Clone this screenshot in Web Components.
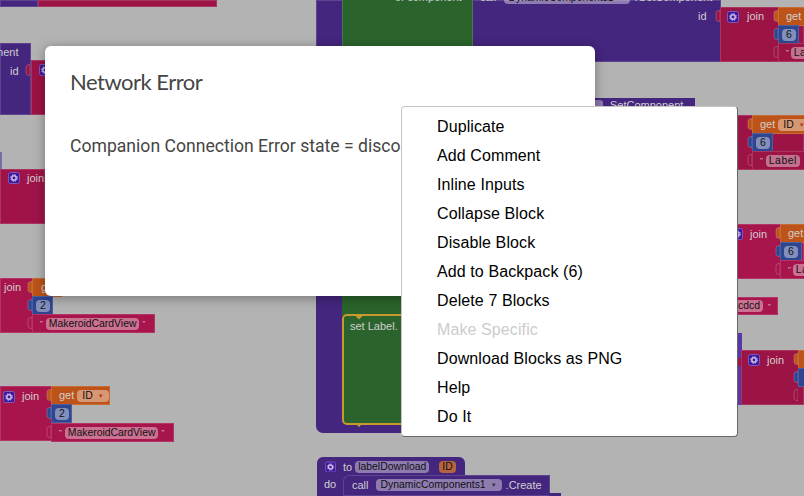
<!DOCTYPE html>
<html>
<head>
<meta charset="utf-8">
<style>
  html, body { margin: 0; padding: 0; }
  body { width: 804px; height: 496px; overflow: hidden; background: #b3b3b3; }
</style>
</head>
<body>
<template id="tpl-canvas">
  <style>
    :host { display: block; position: relative; width: 804px; height: 496px; overflow: hidden; background: #b3b3b3; }
  </style>
  <slot></slot>
</template>

<template id="tpl-block">
  <style>
    :host {
      position: absolute;
      display: flex;
      align-items: center;
      box-sizing: border-box;
      white-space: nowrap;
      font: 11px/11px "Liberation Sans", Arial, sans-serif;
      color: #cfcfcf;
      border: 1px solid rgba(255, 255, 255, .14);
    }
    :host([flat]) { border: none; }
    :host([plain]) { background: none !important; border: none; }
  </style>
  <slot></slot>
</template>

<template id="tpl-pill">
  <style>
    :host {
      display: inline-flex;
      align-items: center;
      height: 12px;
      padding: 0 3px;
      border-radius: 4px;
      background: rgba(255, 255, 255, .4);
      color: #111;
      font: 10.4px/12px "Liberation Sans", Arial, sans-serif;
      white-space: nowrap;
      margin: 0 3px;
    }
    i { font-style: normal; font-size: 6px; margin-left: 5px; color: #b33b1b; }
    :host([dark]) i { color: #333; }
  </style>
  <slot></slot><i hidden>▼</i>
</template>

<template id="tpl-gear">
  <style>
    :host { display: inline-flex; width: 12px; height: 12px; flex: none; }
    svg { display: block; }
  </style>
  <svg width="12" height="12" viewBox="0 0 12 12">
    <rect x=".5" y=".5" width="11" height="11" rx="2" fill="#3f169f" stroke="#7a5cb8"/>
    <circle cx="6" cy="6" r="2.2" fill="none" stroke="#cdbfe6" stroke-width="1.5"/>
    <circle cx="6" cy="6" r="3.4" fill="none" stroke="#cdbfe6" stroke-width="1" stroke-dasharray="1.4 1.27"/>
  </svg>
</template>

<template id="tpl-notch">
  <style>
    :host { position: absolute; display: block; width: 5px; height: 12px; }
    svg { display: block; }
  </style>
  <svg width="5" height="12" viewBox="0 0 5 12">
    <path d="M5 0.5C2 0.5 1 1.5 1 3V9C1 10.5 2 11.5 5 11.5Z" fill="currentColor" stroke="rgba(255,255,255,.3)" stroke-width=".7"/>
  </svg>
</template>

<template id="tpl-dialog">
  <style>
    :host {
      position: absolute;
      left: 45px; top: 46px;
      width: 550px; height: 250px;
      box-sizing: border-box;
      padding: 20px 25px;
      background: #fff;
      border-radius: 6px;
      box-shadow: 0 2px 12px rgba(0, 0, 0, .35);
      color: #444;
      overflow: hidden;
    }
    h2 {
      margin: 0 0 36px;
      font: 400 22px/32px Lato, "Open Sans", sans-serif;
      letter-spacing: -.5px;
      color: #454545;
    }
    p { margin: 0; font: 17.6px/24px Roboto, sans-serif; white-space: nowrap; color: #454545; }
  </style>
  <h2><slot name="title"></slot></h2>
  <p><slot></slot></p>
</template>

<template id="tpl-menu">
  <style>
    :host {
      position: absolute;
      left: 401px; top: 106px;
      width: 337px; height: 331px;
      box-sizing: border-box;
      padding: 5px 0;
      display: flex;
      flex-direction: column;
      background: #fff;
      border: 1px solid #c4c4c4;
      border-right-color: #666;
      border-bottom-color: #666;
      border-radius: 4px;
    }
  </style>
  <slot></slot>
</template>

<template id="tpl-item">
  <style>
    :host {
      display: block;
      height: 29px;
      padding-left: 35px;
      font: 16px/29px "Liberation Sans", Arial, sans-serif;
      letter-spacing: .1px;
      color: #000;
      white-space: nowrap;
    }
    :host([disabled]) { color: #ccc; }
  </style>
  <slot></slot>
</template>

<bk-canvas>
  <!-- top left scraps -->
  <bk-block x="0" y="0" w="38" h="7" c="#44267e"></bk-block>
  <bk-block x="38" y="0" w="179" h="7" c="#9c1346"></bk-block>
  <bk-block x="0" y="43" w="31" h="72" c="#44267e" style="padding:3px 0 0 0;align-items:flex-start"><span style="margin-left:-7px">ment</span></bk-block>
  <bk-block plain x="10" y="65" w="16" h="12">id</bk-block>
  <bk-block x="31" y="60" w="20" h="55" c="#9c1346" style="padding:0 0 0 7px;align-items:flex-start"><bk-gear style="margin-top:3px"></bk-gear></bk-block>
  <bk-notch x="25" y="64" c="#9c1346"></bk-notch>

  <!-- left joins -->
  <bk-block x="0" y="152" w="2" h="18" c="#7a6aa8" flat></bk-block>
  <bk-block x="0" y="169" w="45" h="55" c="#a01349" style="padding:2px 0 0 7px;align-items:flex-start"><bk-gear></bk-gear><span style="margin:1px 0 0 7px">join</span></bk-block>

  <bk-block x="0" y="278" w="33" h="55" c="#a8144c" style="padding:3px 0 0 3px;align-items:flex-start">join</bk-block>
  <bk-block x="32" y="278" w="30" h="19" c="#bd5318" style="padding-left:8px">get</bk-block>
  <bk-block x="32" y="296" w="21" h="19" c="#2f4590" style="padding-left:3px"><bk-pill style="margin:0;padding:0 4px">2</bk-pill></bk-block>
  <bk-block x="32" y="314" w="123" h="19" c="#a8144c" style="padding-left:7px"><span style="font-size:8px">"</span><bk-pill>MakeroidCardView</bk-pill><span style="font-size:8px">"</span></bk-block>
  <bk-notch x="27" y="281" c="#bd5318"></bk-notch>
  <bk-notch x="27" y="299" c="#2f4590"></bk-notch>
  <bk-notch x="27" y="317" c="#a8144c"></bk-notch>

  <bk-block x="0" y="386" w="52" h="55" c="#a8144c" style="padding:4px 0 0 2px;align-items:flex-start"><bk-gear></bk-gear><span style="margin:0 0 0 7px">join</span></bk-block>
  <bk-block x="51" y="386" w="59" h="19" c="#bd5318" style="padding-left:7px">get<bk-pill arrow style="padding:0 5px">ID</bk-pill></bk-block>
  <bk-block x="51" y="404" w="21" h="19" c="#2f4590" style="padding-left:3px"><bk-pill style="margin:0;padding:0 4px">2</bk-pill></bk-block>
  <bk-block x="51" y="423" w="123" h="19" c="#a8144c" style="padding-left:7px"><span style="font-size:8px">"</span><bk-pill>MakeroidCardView</bk-pill><span style="font-size:8px">"</span></bk-block>
  <bk-notch x="46" y="389" c="#bd5318"></bk-notch>
  <bk-notch x="46" y="407" c="#2f4590"></bk-notch>
  <bk-notch x="46" y="426" c="#a8144c"></bk-notch>

  <!-- top centre procedure -->
  <bk-block x="316" y="0" w="405" h="62" c="#44267e"></bk-block>
  <bk-block x="342" y="-6" w="131" h="120" c="#2a642c"></bk-block>
  <bk-block plain x="395" y="-9" w="80" h="13">of component</bk-block>
  <bk-block plain x="480" y="-9" w="240" h="13">call<bk-pill dark arrow style="margin:0 5px 0 7px;padding:0 5px">DynamicComponents1</bk-pill>.GetComponent</bk-block>
  <bk-block plain x="698" y="10" w="16" h="12">id</bk-block>
  <bk-notch x="715" y="10" c="#9c1346"></bk-notch>
  <bk-block x="720" y="7" w="84" h="55" c="#9c1346" style="padding:0 0 0 6px;align-items:flex-start"><bk-gear style="margin-top:3px"></bk-gear><span style="margin:3px 0 0 8px">join</span></bk-block>
  <bk-block x="778" y="7" w="30" h="19" c="#bd5318" style="padding-left:7px">get</bk-block>
  <bk-block x="778" y="25" w="21" h="19" c="#2f4590" style="padding-left:3px"><bk-pill style="margin:0;padding:0 4px">6</bk-pill></bk-block>
  <bk-block x="778" y="43" w="30" h="19" c="#9c1346" style="padding-left:7px"><span style="font-size:8px;margin-right:2px">"</span><bk-pill style="margin:0;letter-spacing:.5px">Label</bk-pill></bk-block>
  <bk-notch x="773" y="10" c="#bd5318"></bk-notch>
  <bk-notch x="773" y="28" c="#2f4590"></bk-notch>
  <bk-notch x="773" y="46" c="#9c1346"></bk-notch>

  <bk-block x="595" y="98" w="100" h="12" c="#44267e" flat style="padding:2px 0 0 0;align-items:flex-start"><span style="display:inline-block;width:8px;height:10px;margin:0 7px 0 0;background:#8b7ab0;border-radius:0 3px 3px 0"></span>SetComponent</bk-block>

  <!-- right column -->
  <bk-block x="737" y="115" w="67" h="55" c="#9c1346"></bk-block>
  <bk-block x="752" y="115" w="60" h="19" c="#bd5318" style="padding-left:7px">get<bk-pill arrow style="padding:0 5px">ID</bk-pill></bk-block>
  <bk-block x="752" y="133" w="21" h="19" c="#2f4590" style="padding-left:3px"><bk-pill style="margin:0;padding:0 4px">6</bk-pill></bk-block>
  <bk-block x="752" y="151" w="60" h="19" c="#9c1346" style="padding-left:7px"><span style="font-size:8px">"</span><bk-pill style="letter-spacing:.5px">Label</bk-pill></bk-block>
  <bk-notch x="747" y="118" c="#bd5318"></bk-notch>
  <bk-notch x="747" y="136" c="#2f4590"></bk-notch>
  <bk-notch x="747" y="154" c="#9c1346"></bk-notch>

  <bk-block x="730" y="224" w="74" h="55" c="#a8144c" style="padding:3px 0 0 0;align-items:flex-start"><bk-gear></bk-gear><span style="margin:1px 0 0 7px">join</span></bk-block>
  <bk-block x="780" y="224" w="30" h="19" c="#bd5318" style="padding-left:7px">get</bk-block>
  <bk-block x="780" y="242" w="22" h="19" c="#2f4590" style="padding-left:3px"><bk-pill style="margin:0;padding:0 4px">6</bk-pill></bk-block>
  <bk-block x="780" y="260" w="30" h="19" c="#a8144c" style="padding-left:7px"><span style="font-size:8px;margin-right:2px">"</span><bk-pill style="margin:0;letter-spacing:.5px">Label</bk-pill></bk-block>
  <bk-notch x="775" y="227" c="#bd5318"></bk-notch>
  <bk-notch x="775" y="245" c="#2f4590"></bk-notch>
  <bk-notch x="775" y="263" c="#a8144c"></bk-notch>

  <bk-block x="720" y="297" w="58" h="18" c="#a8144c" style="padding-left:11px"><bk-pill>cdcd</bk-pill><span style="font-size:8px;margin-left:2px">"</span></bk-block>
  <bk-block x="738" y="333" w="4" h="72" c="#5a37a8" flat></bk-block>
  <bk-block x="738" y="358" w="4" h="8" c="#9c1346" flat></bk-block>
  <bk-block x="741" y="350" w="63" h="55" c="#9c1346" style="padding:3px 0 0 6px;align-items:flex-start"><bk-gear></bk-gear><span style="margin:1px 0 0 7px">join</span></bk-block>
  <bk-block x="798" y="350" w="10" h="19" c="#bd5318"></bk-block>
  <bk-block x="798" y="368" w="10" h="19" c="#2f4590"></bk-block>
  <bk-notch x="793" y="353" c="#bd5318"></bk-notch>
  <bk-notch x="793" y="371" c="#2f4590"></bk-notch>
  <bk-notch x="793" y="389" c="#9c1346"></bk-notch>

  <!-- centre bottom procedure -->
  <bk-block x="316" y="280" w="90" h="153" c="#44267e" flat style="border-radius:0 0 0 7px"></bk-block>
  <bk-block x="342" y="280" w="64" h="36" c="#2a642c" flat></bk-block>
  <bk-block x="342" y="314" w="64" h="111" c="#2a642c" style="border:2px solid #c79a2e;border-radius:5px;padding:5px 0 0 6px;align-items:flex-start">set Label.</bk-block>
  <bk-block plain x="352" y="314" w="14" h="6"><svg width="14" height="6" viewBox="0 0 14 6"><path d="M0 1H4L7 4L10 1H14" fill="none" stroke="#c79a2e" stroke-width="2"/></svg></bk-block>
  <bk-block plain x="352" y="424" w="14" h="6"><svg width="14" height="6" viewBox="0 0 14 6"><path d="M0 0H4L7 3L10 0H14Z" fill="#c79a2e"/></svg></bk-block>

  <!-- bottom procedure -->
  <bk-block x="317" y="457" w="148" h="39" c="#44267e" flat style="border-radius:6px 6px 0 0;padding:4px 0 0 8px;align-items:flex-start"><bk-gear style="width:11px;height:11px;overflow:hidden"></bk-gear><span style="margin:1px 0 0 7px">to</span><bk-pill dark style="margin-top:0">labelDownload</bk-pill><bk-pill style="margin:0 0 0 7px;background:#b5643e">ID</bk-pill></bk-block>
  <bk-block plain x="324" y="478" w="16" h="13">do</bk-block>
  <bk-block x="343" y="475" w="207" h="21" c="#44267e" style="border-radius:6px 0 0 0;padding:3px 0 0 8px;align-items:flex-start"><span style="margin-top:1px">call</span><bk-pill dark arrow style="margin:0 4px 0 7px;padding:0 5px">DynamicComponents1</bk-pill><span style="margin-top:1px">.Create</span></bk-block>
  <bk-block x="549" y="493" w="12" h="3" c="#44267e" flat></bk-block>

  <err-dialog>
    <span slot="title">Network Error</span>
    Companion Connection Error state = disconnected
  </err-dialog>

  <ctx-menu>
    <menu-item>Duplicate</menu-item>
    <menu-item>Add Comment</menu-item>
    <menu-item>Inline Inputs</menu-item>
    <menu-item>Collapse Block</menu-item>
    <menu-item>Disable Block</menu-item>
    <menu-item>Add to Backpack (6)</menu-item>
    <menu-item>Delete 7 Blocks</menu-item>
    <menu-item disabled>Make Specific</menu-item>
    <menu-item>Download Blocks as PNG</menu-item>
    <menu-item>Help</menu-item>
    <menu-item>Do It</menu-item>
  </ctx-menu>
</bk-canvas>

<script>
// every element here is just a template in a shadow root
class TplElement extends HTMLElement {
    constructor() {
        super();
        const tpl = document.getElementById(this.constructor.tpl);
        this.attachShadow({ mode: 'open' });
        this.shadowRoot.appendChild(tpl.content.cloneNode(true));
    }
}

class BkCanvas extends TplElement { static tpl = 'tpl-canvas'; }

// one piece of a block, placed on the workspace by x/y/w/h
class BkBlock extends TplElement {
    static tpl = 'tpl-block';
    connectedCallback() {
        const a = (n) => this.getAttribute(n);
        this.style.left = a('x') + 'px';
        this.style.top = a('y') + 'px';
        this.style.width = a('w') + 'px';
        this.style.height = a('h') + 'px';
        if (a('c')) this.style.background = a('c');
    }
}

class BkPill extends TplElement {
    static tpl = 'tpl-pill';
    connectedCallback() {
        if (this.hasAttribute('arrow')) this.shadowRoot.querySelector('i').hidden = false;
    }
}

class BkGear extends TplElement { static tpl = 'tpl-gear'; }

class BkNotch extends TplElement {
    static tpl = 'tpl-notch';
    connectedCallback() {
        this.style.left = this.getAttribute('x') + 'px';
        this.style.top = this.getAttribute('y') + 'px';
        this.style.color = this.getAttribute('c');
    }
}

class ErrDialog extends TplElement { static tpl = 'tpl-dialog'; }
class CtxMenu extends TplElement { static tpl = 'tpl-menu'; }
class MenuItem extends TplElement { static tpl = 'tpl-item'; }

customElements.define('bk-canvas', BkCanvas);
customElements.define('bk-block', BkBlock);
customElements.define('bk-pill', BkPill);
customElements.define('bk-gear', BkGear);
customElements.define('bk-notch', BkNotch);
customElements.define('err-dialog', ErrDialog);
customElements.define('ctx-menu', CtxMenu);
customElements.define('menu-item', MenuItem);
</script>
</body>
</html>
